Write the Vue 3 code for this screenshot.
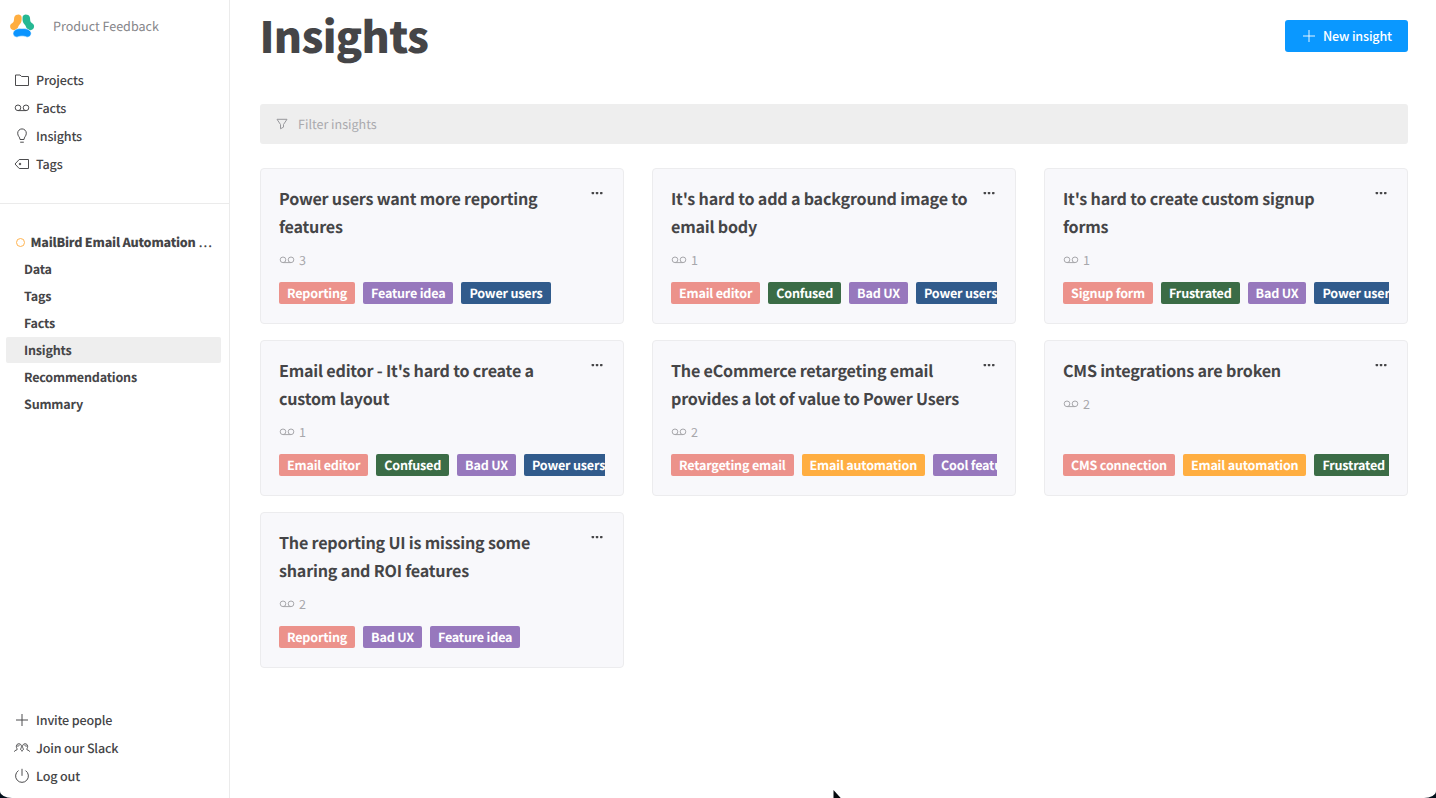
<script setup>
const C = { red: 'red', purple: 'purple', blue: 'blue', green: 'green', orange: 'orange' }
const t = (label, color) => ({ label, color })
const email = t('Email editor', C.red)
const confused = t('Confused', C.green)
const badUx = t('Bad UX', C.purple)
const power = t('Power users', C.blue)
const reporting = t('Reporting', C.red)
const idea = t('Feature idea', C.purple)
const automation = t('Email automation', C.orange)
const frustrated = t('Frustrated', C.green)

const cards = [
  { lines: ['Power users want more reporting', 'features'], count: 3, tags: [reporting, idea, power] },
  { lines: ["It's hard to add a background image to", 'email body'], count: 1, tags: [email, confused, badUx, power] },
  { lines: ["It's hard to create custom signup", 'forms'], count: 1, tags: [t('Signup form', C.red), frustrated, badUx, power] },
  { lines: ["Email editor - It's hard to create a", 'custom layout'], count: 1, tags: [email, confused, badUx, power] },
  { lines: ['The eCommerce retargeting email', 'provides a lot of value to Power Users'], count: 2, tags: [t('Retargeting email', C.red), automation, t('Cool feature', C.purple)] },
  { lines: ['CMS integrations are broken'], count: 2, tags: [t('CMS connection', C.red), automation, frustrated] },
  { lines: ['The reporting UI is missing some', 'sharing and ROI features'], count: 2, tags: [reporting, badUx, idea] },
]
const projectLinks = ['Data', 'Tags', 'Facts', 'Insights', 'Recommendations', 'Summary']
</script>

<template>
  <div class="window">
    <aside class="sidebar">
      <div class="brand">
        <svg class="logo" width="26" height="26" viewBox="0 0 26 26">
          <path d="M7 2C9.500.8 12.300 1.500 12.600 4c.3 3-.1 5.500-2 7.500C9 13 9 16 6.800 16.800 3.500 18 1 16 1.100 13c0-2 2.200-2.600 3.300-4C5.600 7 4.300 3.500 7 2z" fill="#ffae41" />
          <path d="M19.200 2C16.700.8 13.900 1.500 13.600 4c-.3 3 .1 5.500 2 7.500 1.600 1.500 1.600 4.500 3.800 5.300 3.300 1.200 5.800-.8 5.700-3.800 0-2-2.200-2.600-3.300-4C20.600 7 21.900 3.500 19.200 2z" fill="#26b893" />
          <path d="M4.300 19C6.500 15.500 9.500 15.600 13.100 15.600S19.700 15.500 21.900 19c1.300 3-2 6-4.600 4.900-2-1-6.400-1-8.400 0C6.300 25 3 22 4.300 19z" fill="#0a94ff" stroke="#fff" stroke-width=".6" />
        </svg>
        <span class="lift">Product Feedback</span>
      </div>
      <nav class="nav main-nav">
        <a><svg width="16" height="16" viewBox="0 0 16 16"><path d="M1.500 3H6l1.600 1.500h6.900v9h-13z" /></svg><span>Projects</span></a>
        <a><svg width="16" height="16" viewBox="0 0 16 16"><circle cx="4" cy="7.800" r="2.800" /><circle cx="12" cy="7.800" r="2.800" /><path d="M4 10.600h8" /></svg><span>Facts</span></a>
        <a><svg width="16" height="16" viewBox="0 0 16 16"><path d="M6 11.500C6 9 3.700 8.300 3.700 5.200a4.300 4.300 0 0 1 8.600 0C12.300 8.300 10 9 10 11.500zM6.200 14.200h3.600" /></svg><span>Insights</span></a>
        <a><svg width="16" height="16" viewBox="0 0 16 16"><path d="M5.200 3.500h9.300v9H5.200L1 8z" /><circle cx="6" cy="8" r=".8" class="dot" /></svg><span>Tags</span></a>
      </nav>
      <section class="project">
        <div class="project-name"><i></i><b>MailBird Email Automation</b><span>...</span></div>
        <a v-for="p in projectLinks" :key="p" :class="{ active: p === 'Insights' }">{{ p }}</a>
      </section>
      <nav class="nav bottom-nav">
        <a><svg width="16" height="16" viewBox="0 0 16 16"><path d="M8 2v12M2 8h12" /></svg><span>Invite people</span></a>
        <a><svg width="16" height="16" viewBox="0 0 16 16"><path d="M.3 11.700c.3-1.900 2.900-1 3-2.700C1.700 7.300 2 3.800 4.900 3.800S8.100 7.300 6.500 9c.1 1.300 1.300 1.100 1.500 2.300M15.700 11.700c-.3-1.900-2.900-1-3-2.700 1.600-1.700 1.300-5.200-1.600-5.200S7.900 7.300 9.500 9c-.1 1.300-1.300 1.100-1.500 2.300M2.700 6c1.500.2 2.300-.2 2.900-.9M13.300 6c-1.500.2-2.300-.2-2.900-.9" /></svg><span>Join our Slack</span></a>
        <a><svg width="16" height="16" viewBox="0 0 16 16"><path d="M8 .8v7M4.500 2.600a6.400 6.400 0 1 0 7 0" /></svg><span>Log out</span></a>
      </nav>
    </aside>
    <main class="content">
      <header>
        <h1>Insights</h1>
        <button><svg width="14" height="14" viewBox="0 0 14 14"><path d="M7 1v12M1 7h12" /></svg><span class="lift">New insight</span></button>
      </header>
      <div class="filter">
        <svg width="12" height="12" viewBox="0 0 12 12"><path d="M1 1.300h10L7.500 6.500v2.600l-3 1.700V6.500z" /></svg>
        <span class="lift">Filter insights</span>
      </div>
      <div class="grid">
        <article v-for="(c, i) in cards" :key="i" class="card">
          <div class="top">
            <h2><span v-for="l in c.lines" :key="l">{{ l }}</span></h2>
            <svg class="more" width="12" height="4" viewBox="0 0 12 4"><rect x=".6" y=".9" width="2.500" height="2.300" rx=".6" /><rect x="4.800" y=".9" width="2.500" height="2.300" rx=".6" /><rect x="9" y=".9" width="2.500" height="2.300" rx=".6" /></svg>
          </div>
          <div class="count">
            <svg width="16" height="16" viewBox="0 0 16 16"><circle cx="4" cy="7.800" r="2.800" /><circle cx="12" cy="7.800" r="2.800" /><path d="M4 10.600h8" /></svg>
            <span class="lift">{{ c.count }}</span>
          </div>
          <div class="tags"><span v-for="g in c.tags" :key="g.label" :class="['tag', g.color]">{{ g.label }}</span></div>
        </article>
      </div>
    </main>
    <svg class="cursor" width="12" height="10" viewBox="0 0 12 10"><path d="M1.500 0V10H10.500Z" /></svg>
  </div>
</template>

<style>
html, body { margin: 0; background: #03101c; overflow: hidden; }
</style>

<style scoped>
.window {
  position: relative;
  display: flex;
  height: 798px;
  background: #fff;
  color: #454547;
  border-radius: 0 0 12px 12px / 0 0 7px 7px;
  overflow: hidden;
  font-family: "Noto Sans CJK SC", "Noto Sans", sans-serif;
  font-size: 12.550px;
  text-rendering: geometricPrecision;
}
svg { flex: none; fill: none; stroke: currentColor; stroke-width: 1; }
.lift { padding-bottom: 2px; }
.sidebar {
  box-sizing: border-box;
  width: 230px;
  flex: none;
  display: flex;
  flex-direction: column;
  border-right: 1px solid #ebebeb;
}
.brand { display: flex; align-items: center; height: 52px; padding-left: 9px; color: #858589; }
.logo { stroke: none; margin-right: 18px; }
.nav a { display: flex; align-items: center; height: 28px; padding-left: 14px; gap: 6px; line-height: 28px; font-weight: 500; letter-spacing: -.16px; }
.nav svg { stroke: #4c4c4e; }
.dot { fill: #4c4c4e; }
.main-nav { padding: 14px 0 25px; border-bottom: 1px solid #ebebeb; }
.project { padding-top: 25px; font-weight: 700; letter-spacing: -.19px; }
.project-name { display: flex; align-items: center; height: 27px; line-height: 24px; padding-left: 15.500px; white-space: nowrap; }
.project-name i { box-sizing: border-box; width: 9px; height: 9px; border: 1.500px solid #ffb34f; border-radius: 50%; margin: -1px 6px 0 0; }
.project-name b { letter-spacing: -.22px; padding-bottom: 1px; }
.project-name span { margin-left: 3px; font-weight: 500; letter-spacing: 1.100px; padding-bottom: 1px; }
.project a { display: block; height: 26px; line-height: 26px; margin: 0 8px 1px 6px; padding-left: 18px; border-radius: 2px; }
.project a.active { background: #eee; }
.bottom-nav { margin-top: auto; padding-bottom: 8px; }
.content { flex: 1; padding: 0 28px 0 30px; }
header { display: flex; justify-content: space-between; height: 104px; }
h1 { margin: 0 0 0 -.5px; font-size: 43px; line-height: 70px; font-weight: 900; letter-spacing: -.7px; }
button {
  display: flex; align-items: center; gap: 7px; margin-top: 20px; padding: 0 16px 0 17px; height: 32px; width: 123px; white-space: nowrap;
  border: 0; border-radius: 3px; background: #0a98ff; color: #fff; font: inherit; font-weight: 500; letter-spacing: -.16px;
}
button svg { stroke-width: .9; }
.filter { display: flex; align-items: center; height: 40px; padding-left: 16px; gap: 10px; border-radius: 3px; background: #eee; color: #a9a9ad; }
.filter svg { stroke: #98989c; }
.grid { margin-top: 24px; display: grid; grid-template-columns: repeat(3, 364px); column-gap: 28px; row-gap: 16px; }
.card {
  box-sizing: border-box; height: 156px; min-width: 0; padding: 15px 18px 19px; display: flex; flex-direction: column;
  border: 1px solid #ececee; border-radius: 4px; background: #f8f8fb;
}
.top { display: flex; justify-content: space-between; }
h2 { margin: 0; font-size: 16.100px; line-height: 28px; font-weight: 600; letter-spacing: -.2px; }
h2 span { display: block; white-space: nowrap; }
.more { fill: #454547; stroke: none; margin: 7px 2px 0 0; }
.count { display: flex; align-items: center; gap: 4px; height: 20px; margin-top: 10px; color: #a7a7ab; }
.tags { display: flex; gap: 8px; margin-top: auto; overflow: hidden; }
.tag { flex: none; height: 22px; line-height: 22px; padding: 0 8px; border-radius: 2px; color: #fff; font-weight: 700; letter-spacing: -.185px; white-space: nowrap; }
.red { background: #ec928b; }
.purple { background: #9778bd; }
.blue { background: #315b8c; }
.green { background: #3b6c46; }
.orange { background: #ffae41; }
.cursor { position: absolute; left: 832px; top: 790px; fill: #050a0e; stroke: none; }
</style>
